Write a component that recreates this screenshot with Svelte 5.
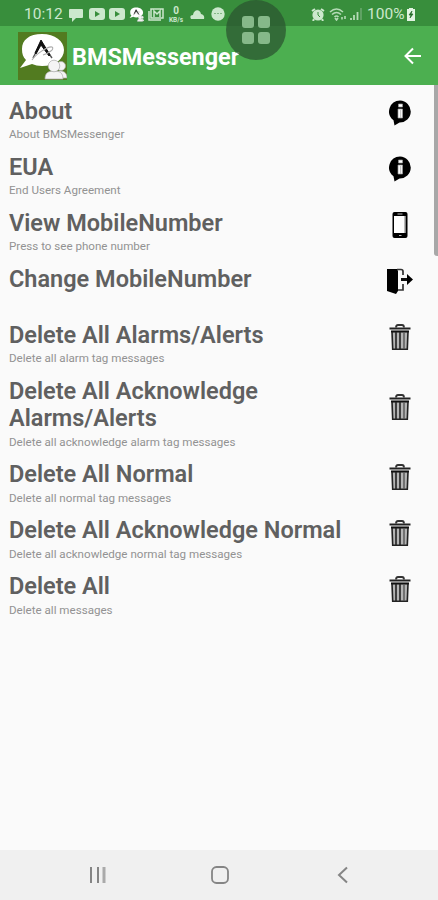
<script>
    // Itens da lista de configurações
    const items = [
        { title: 'About', text: 'About BMSMessenger', icon: 'info' },
        { title: 'EUA', text: 'End Users Agreement', icon: 'info' },
        { title: 'View MobileNumber', text: 'Press to see phone number', icon: 'phone' },
        { title: 'Change MobileNumber', text: '', icon: 'exit' },
        { title: 'Delete All Alarms/Alerts', text: 'Delete all alarm tag messages', icon: 'trash' },
        { title: 'Delete All Acknowledge Alarms/Alerts', text: 'Delete all acknowledge alarm tag messages', icon: 'trash' },
        { title: 'Delete All Normal', text: 'Delete all normal tag messages', icon: 'trash' },
        { title: 'Delete All Acknowledge Normal', text: 'Delete all acknowledge normal tag messages', icon: 'trash' },
        { title: 'Delete All', text: 'Delete all messages', icon: 'trash' }
    ];
</script>

<!-- Logo usado na barra e na notificação -->
{#snippet logo()}
    <path d="M24 2C11 2 4 8 4 17c0 5 1 8 4 11L2 36l12-4c3 1 6 2 10 2 13 0 22-7 22-16S37 2 24 2z" fill="#fff" />
    <path d="M15 26l8-16 11 16" fill="none" stroke="#555" stroke-width="1.4" />
    <path d="M17 21l6-13 9 15-1 1-8-11-5 9z" fill="#111" stroke="#111" />
    <path d="M14 28c4-6 16-14 20-13 3 2-3 6-9 8" fill="none" stroke="#aaa" stroke-width="1.1" />
    <path d="M36 46c0-6 3-7 6-7s7 1 7 7z" fill="#f4f4f4" stroke="#aaa" stroke-width=".7" />
    <circle cx="43" cy="34" r="4.5" fill="#f4f4f4" stroke="#aaa" stroke-width=".7" />
    <path d="M27 47c0-6 3-8 9-8s9 2 9 8z" fill="#f4f4f4" stroke="#aaa" stroke-width=".7" />
    <circle cx="36" cy="34" r="5.8" fill="#f4f4f4" stroke="#aaa" stroke-width=".7" />
{/snippet}

<div class="screen">
    <div class="status">
        <span class="time">10:12</span>
        <svg class="comment" width="14" height="13" viewBox="0 0 14 13"><path d="M1 0h12q1 0 1 1v7q0 1-1 1H7l-4 4V9H1Q0 9 0 8V1q0-1 1-1z" fill="#cce8cd" /></svg>
        {#each [1, 2] as n}
            <svg class="video" width="16" height="12" viewBox="0 0 16 12"><rect width="16" height="12" rx="3" fill="#cce8cd" /><path d="M6 3l5 3-5 3z" fill="#388e3c" /></svg>
        {/each}
        <svg class="mini" width="15" height="15" viewBox="0 0 49 49">{@render logo()}</svg>
        <svg class="mail" width="16" height="13" viewBox="0 0 16 13" fill="none" stroke="#cce8cd" stroke-width="1.5"><path d="M3 1h12v9H3zM1 3v9h12M6 9V3l3 3 3-3v6" /></svg>
        <span class="speed"><b>0</b><small>KB/s</small></span>
        <svg class="cloud" width="15" height="9" viewBox="0 0 15 9"><path d="M1 9Q-1 5 3 5C4-1 10-1 11 4q4 1 3 5z" fill="#cce8cd" /></svg>
        <svg class="dots" width="14" height="14" viewBox="0 0 14 14"><circle cx="7" cy="7" r="6.7" fill="#cce8cd" /><path d="M3 6.500h8" stroke="#83b885" stroke-dasharray="2 1" /></svg>
        <div class="right">
            <svg width="14" height="13" viewBox="0 0 14 13"><path d="M1 3l3-2M13 3l-3-2M3 11l-1 2M11 11l1 2" stroke="#cce8cd" stroke-width="2" /><circle cx="7" cy="7" r="5.6" fill="#cce8cd" /><path d="M7 4v3l2 2" fill="none" stroke="#388e3c" /></svg>
            <svg class="wifi" width="18" height="13" viewBox="0 0 18 13" fill="none" stroke="#b5dbb7" stroke-width="1.6"><path d="M1 4q6.500-6 13 0M3 6.500q4.500-4 9 0M5.500 9q2-2 4 0" /><path d="M6 10l1.500 2L9 10M13 11.500V9M16 8v3" /></svg>
            <svg class="signal" width="12" height="12" viewBox="0 0 12 12" stroke-width="1.8"><path d="M1 12v-2M4 12V7M7.500 12V4" stroke="#b5dbb7" /><path d="M11 12V0" stroke="#65a568" /></svg>
            <span class="percent">100%</span>
            <svg width="8" height="13" viewBox="0 0 8 13"><path d="M2 0h4v1h2v12H0V1h2z" fill="#e2f3e2" /><path d="M5 3L2 7h2l-1 3 3-4H4z" fill="#246b28" stroke="#246b28" stroke-width=".7" /></svg>
        </div>
    </div>

    <header>
        <svg class="logo" width="49" height="48" viewBox="0 0 49 48"><rect width="49" height="48" fill="#527b20" />{@render logo()}</svg>
        <h1>BMSMessenger</h1>
        <svg class="back" width="18" height="18" viewBox="0 0 18 18"><path d="M17 9H2M9 1.500L1.500 9 9 16.500" fill="none" stroke="#fff" stroke-width="2" /></svg>
    </header>

    <!-- Botão flutuante do assistente -->
    <div class="assist">
        <i></i><i></i><i></i><i></i>
    </div>

    <main>
        <div class="scroll"></div>
        {#each items as item}
            <div class="item">
                <h2>{item.title}</h2>
                <div class="icon">
                    {#if item.icon === 'info'}
                        <svg width="24" height="26" viewBox="0 0 24 26">
                            <path d="M12 .5a11 11 0 0 0-6.500 19.800L6.500 25.500l5-3A11 11 0 1 0 12 .5z" />
                            <path d="M10.500 4h4v3h-4zM10 9h4.500v9H10z" fill="#fff" stroke="#999" stroke-width=".7" />
                            <path d="M12.700 10v8" stroke="#bbb" />
                        </svg>
                    {:else if item.icon === 'phone'}
                        <svg width="24" height="26" viewBox="0 0 24 26">
                            <rect x="4.500" y="0" width="15" height="26" rx="2" />
                            <path d="M6 4h11.500v17H6z" fill="#fff" />
                            <path d="M16.500 4v17M9.500 2h5M11 23.500h2.500" stroke="#bbb" />
                        </svg>
                    {:else if item.icon === 'exit'}
                        <svg width="26" height="26" viewBox="0 0 26 26">
                            <path d="M0 1h10l1 2v20l-2 3-9-3z" />
                            <path d="M10 1.500h4q2 0 2 2V7M16 16v6h-5" fill="none" stroke="#333" stroke-width="1.700" />
                            <path d="M14 11.500h7" stroke="#111" stroke-width="3" />
                            <path d="M20 6l6 5.500-6 5.500z" />
                        </svg>
                    {:else}
                        <svg width="24" height="26" viewBox="0 0 24 26">
                            <path d="M8 3.500q0-2.500 2-2.500h4q2 0 2 2.500" fill="none" stroke="#333" stroke-width="1.800" />
                            <path d="M1.500 3.500h21v2h-21z" fill="#222" />
                            <path d="M4 7.500h16l-.7 17.700H4.700z" fill="#b5b5b5" stroke="#222" stroke-width="1.600" />
                            <path d="M3 7.500h18" stroke="#111" stroke-width="1.800" />
                            <path d="M8 8v17M12 8v17" stroke="#222" stroke-width="1.600" />
                            <path d="M16 8v17" stroke="#555" stroke-width="1.400" />
                        </svg>
                    {/if}
                </div>
                <p>{item.text}</p>
            </div>
        {/each}
    </main>

    <nav>
        <svg width="18" height="18" viewBox="0 0 18 18"><path d="M3 1v16M10 1v16" stroke="#858585" stroke-width="2" /><path d="M16 1v16" stroke="#aaa" stroke-width="3" /></svg>
        <svg width="18" height="18" viewBox="0 0 18 18"><rect x="1" y="1" width="16" height="16" rx="4.500" fill="none" stroke="#858585" stroke-width="1.800" /></svg>
        <svg width="18" height="18" viewBox="0 0 18 18"><path d="M13 1.500L5 9l8 7.500" fill="none" stroke="#858585" stroke-width="2" /></svg>
    </nav>
</div>

<style>
    .screen {
        position: relative;
        display: flex;
        flex-direction: column;
        width: 438px;
        height: 900px;
        overflow: hidden;
        background: #fafafa;
        font-family: Roboto, sans-serif;
    }

    svg {
        display: block;
        flex: none;
    }

    h1, h2, p {
        margin: 0;
    }

    .status {
        display: flex;
        align-items: center;
        box-sizing: border-box;
        height: 26px;
        padding: 2px 23px 0 24px;
        background: #388e3c;
        color: #cce8cd;
    }

    .time {
        width: 45px;
        font-size: 15.5px;
    }

    .comment {
        margin: 2px 6px 0 0;
    }

    .video, .mini, .mail {
        margin-right: 4px;
    }

    .speed {
        display: flex;
        flex-direction: column;
        align-items: center;
        width: 16px;
        margin-right: 6px;
    }

    .speed b {
        font-size: 10px;
        line-height: 11px;
    }

    .speed small {
        font-size: 6.5px;
        line-height: 8px;
        font-weight: 700;
    }

    .cloud {
        margin-right: 6px;
    }

    .right {
        display: flex;
        align-items: center;
        margin-left: auto;
    }

    .wifi {
        margin-left: 4px;
    }

    .signal {
        margin: 0 5px 0 3px;
    }

    .percent {
        width: 40px;
        font-size: 15.5px;
    }

    header {
        display: flex;
        align-items: center;
        box-sizing: border-box;
        height: 59px;
        padding: 0 16px 0 18px;
        background: #4caf50;
    }

    .back {
        margin: 0 0 0 auto;
    }

    h1 {
        margin: 3px 0 0 5px;
        color: #fff;
        font-size: 23.4px;
        font-weight: 700;
        line-height: 28px;
    }

    .assist {
        position: absolute;
        left: 226px;
        top: 0;
        display: grid;
        grid-template-columns: 12px 12px;
        gap: 4px;
        place-content: center;
        width: 60px;
        height: 60px;
        border-radius: 50%;
        background: rgba(43, 85, 48, .75);
    }

    .assist i {
        height: 12px;
        border-radius: 3px;
        background: #86b889;
    }

    main {
        position: relative;
        flex: 1;
        padding: 12px 25px 0 9px;
    }

    .scroll {
        position: absolute;
        right: 0;
        top: 0;
        width: 4px;
        height: 171px;
        border-radius: 0 0 0 3px;
        background: #a8a8a8;
    }

    .item {
        display: grid;
        grid-template-columns: 340px 26px;
        justify-content: space-between;
        align-items: center;
        padding-bottom: 12px;
    }

    h2 {
        padding-top: .5px;
        color: #606060;
        font-size: 23.5px;
        font-weight: 600;
        line-height: 27.5px;
    }

    /* o ícone ocupa a mesma altura de uma linha do título */
    .icon {
        display: flex;
        justify-content: center;
        height: 25px;
        margin-top: 3px;
    }

    p {
        grid-column: 1 / -1;
        height: 16px;
        padding-top: 2px;
        box-sizing: border-box;
        color: #929292;
        font-size: 11.6px;
        line-height: 14px;
    }

    nav {
        display: flex;
        justify-content: space-between;
        align-items: center;
        height: 50px;
        padding: 0 86px 0 88px;
        background: #f0f0f0;
    }
</style>
